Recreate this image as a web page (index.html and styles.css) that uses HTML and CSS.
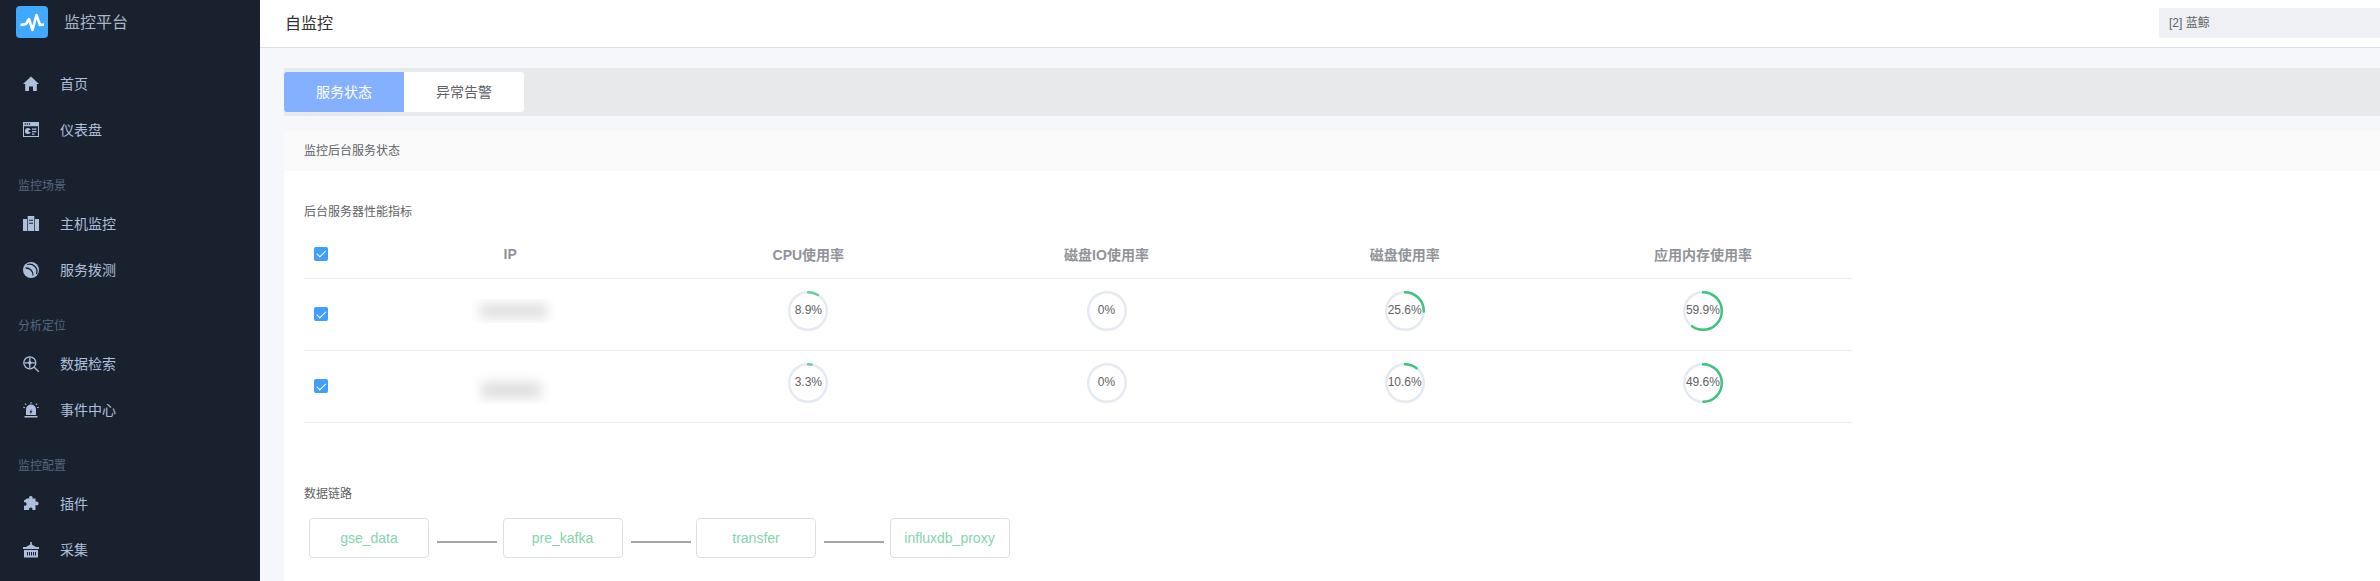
FILE: index.html
```html
<!DOCTYPE html>
<html>
  <head>
    <meta charset="utf-8" />
    <title>自监控</title>
    <link rel="stylesheet" href="styles.css">
  </head>
  <body>
    <div class="app">
      <aside class="sidebar">
        <div class="brand">
          <svg class="brand-logo" viewBox="0 0 32 32">
            <rect width="32" height="32" rx="4" fill="#3fa9ff" />
            <polyline points="4.5,19 10,18 13,13 16.5,24 20.5,9 24,19 28,18.5" fill="none" stroke="#fff" stroke-width="2.6" stroke-linejoin="round" />
          </svg>
          <span class="brand-name">监控平台</span>
        </div>
        <nav class="menu">
          <a class="menu-item">
            <svg class="menu-icon" viewBox="0 0 16 16"><path d="M8 .5 16 8h-2.200v7H10v-4.600H6V15H2.200V8H0z" /></svg>
            <span class="menu-text">首页</span>
          </a>
          <a class="menu-item">
            <svg class="menu-icon" viewBox="0 0 16 16"><path fill-rule="evenodd" d="M0 0h16v15H0zM1.500 1.200v1.600h1.200V1.200zm2.200 0v1.600h1.200V1.200zm2.200 0v1.600h1.200V1.200zM1 4.300V14h14V4.300zM5 6a3 3 0 1 0 2.800 4H5.600V8h2.200A3 3 0 0 0 5 6zm4 .6v1.200h4.500V6.600zm0 2.500v1.200h4.500V9.100zm0 2.400v1.200h2.500v-1.200z" /></svg>
            <span class="menu-text">仪表盘</span>
          </a>
          <div class="menu-label">监控场景</div>
          <a class="menu-item">
            <svg class="menu-icon" viewBox="0 0 16 16"><path fill-rule="evenodd" d="M0 3h4v12H0zM4.700 0h6.600v15H4.700zM12 3h4v12h-4zM6 3.800v1h4v-1zm0 3v1h4v-1z" /></svg>
            <span class="menu-text">主机监控</span>
          </a>
          <a class="menu-item">
            <svg class="menu-icon" viewBox="0 0 16 16"><circle cx="8" cy="8" r="8" /><path class="icon-cut" d="M4 2.500A7.500 7.500 0 0 1 13.500 12M2.500 6A7 7 0 0 1 10 13.500" /></svg>
            <span class="menu-text">服务拨测</span>
          </a>
          <div class="menu-label">分析定位</div>
          <a class="menu-item">
            <svg class="menu-icon menu-icon-line" viewBox="0 0 16 16"><circle cx="6.800" cy="6.800" r="6" /><circle class="icon-dot" cx="6.800" cy="6.800" r="1.800" /><path d="M6.800 1.500v10.600M1.500 6.800h10.600M11.200 11.200 16 16" /></svg>
            <span class="menu-text">数据检索</span>
          </a>
          <a class="menu-item">
            <svg class="menu-icon" viewBox="0 0 16 16"><path fill-rule="evenodd" d="M1.500 14h13v1.500h-13zM3 13V7.500a5 5 0 0 1 10 0V13zM8.500 7 6.500 10.300h1.300L7.300 12.500l2.200-3.300H8.200zM7.500 0h1v1.800h-1zM1.600 1.800l.8-.6 1.200 1.500-.8.6zM13.600 1.200l.8.6-1.200 1.500-.8-.6zM0 5.600l.3-.9 1.800.6-.3.9zM15.700 4.700l.3.9-1.800.6-.3-.9z" /></svg>
            <span class="menu-text">事件中心</span>
          </a>
          <div class="menu-label">监控配置</div>
          <a class="menu-item">
            <svg class="menu-icon" viewBox="0 0 16 16"><path d="M4 2.500h2.300C5.600 1 6.400 0 7.800 0s2.200 1 1.600 2.500h3.100v3.200c1.500-.7 3.100 0 3.100 1.700s-1.600 2.400-3.100 1.700V14H9.300c.6-1.500-.2-2.400-1.500-2.400S5.600 12.500 6.200 14H1V9.600c1.200.6 2.600 0 2.600-1.600S2.200 5.800 1 6.400V4.500z" /></svg>
            <span class="menu-text">插件</span>
          </a>
          <a class="menu-item">
            <svg class="menu-icon" viewBox="0 0 16 16"><path fill-rule="evenodd" d="M7.200 0h1.600v2.500L13 5h3v2H0V5h3l4.200-2.500zM1 8h14v7.500H1zM4 10v3.500h1V10zm2 0v3.500h1V10zm2 0v3.500h1V10zm2 0v3.500h1V10zm2 0v3.500h1V10z" /></svg>
            <span class="menu-text">采集</span>
          </a>
        </nav>
      </aside>

      <div class="main">
        <header class="topbar">
          <h1 class="page-title">自监控</h1>
          <div class="biz-select">[2] 蓝鲸</div>
        </header>

        <div class="content">
          <div class="tabs">
            <div class="tab tab-active">服务状态</div>
            <div class="tab">异常告警</div>
          </div>

          <section class="panel">
            <div class="panel-head">监控后台服务状态</div>
            <div class="panel-body">
              <div class="section-title">后台服务器性能指标</div>
              <table class="server-table">
                <colgroup>
                  <col class="col-check" />
                  <col class="col-metric" />
                  <col class="col-metric" />
                  <col class="col-metric" />
                  <col class="col-metric" />
                  <col class="col-metric" />
                </colgroup>
                <thead>
                  <tr>
                    <th class="cell-check"><span class="checkbox"></span></th>
                    <th>IP</th>
                    <th>CPU使用率</th>
                    <th>磁盘IO使用率</th>
                    <th>磁盘使用率</th>
                    <th>应用内存使用率</th>
                  </tr>
                </thead>
                <tbody>
                  <tr>
                    <td class="cell-check"><span class="checkbox"></span></td>
                    <td><div class="masked masked-short"><div class="masked-ink"></div></div></td>
                    <td>
                      <div class="donut donut-light">
                        <svg viewBox="0 0 40 40"><circle class="donut-track" cx="20" cy="20" r="18.800" /><circle class="donut-value" cx="20" cy="20" r="18.800" pathLength="100" stroke-dasharray="8.9 100" transform="rotate(-90 20 20)" /></svg>
                        <span class="donut-text">8.9%</span>
                      </div>
                    </td>
                    <td>
                      <div class="donut">
                        <svg viewBox="0 0 40 40"><circle class="donut-track" cx="20" cy="20" r="18.800" /></svg>
                        <span class="donut-text">0%</span>
                      </div>
                    </td>
                    <td>
                      <div class="donut">
                        <svg viewBox="0 0 40 40"><circle class="donut-track" cx="20" cy="20" r="18.800" /><circle class="donut-value" cx="20" cy="20" r="18.800" pathLength="100" stroke-dasharray="25.6 100" transform="rotate(-90 20 20)" /></svg>
                        <span class="donut-text">25.6%</span>
                      </div>
                    </td>
                    <td>
                      <div class="donut">
                        <svg viewBox="0 0 40 40"><circle class="donut-track" cx="20" cy="20" r="18.800" /><circle class="donut-value" cx="20" cy="20" r="18.800" pathLength="100" stroke-dasharray="59.9 100" transform="rotate(-90 20 20)" /></svg>
                        <span class="donut-text">59.9%</span>
                      </div>
                    </td>
                  </tr>
                  <tr>
                    <td class="cell-check"><span class="checkbox"></span></td>
                    <td><div class="masked masked-tall"><div class="masked-ink"></div></div></td>
                    <td>
                      <div class="donut donut-light">
                        <svg viewBox="0 0 40 40"><circle class="donut-track" cx="20" cy="20" r="18.800" /><circle class="donut-value" cx="20" cy="20" r="18.800" pathLength="100" stroke-dasharray="3.3 100" transform="rotate(-90 20 20)" /></svg>
                        <span class="donut-text">3.3%</span>
                      </div>
                    </td>
                    <td>
                      <div class="donut">
                        <svg viewBox="0 0 40 40"><circle class="donut-track" cx="20" cy="20" r="18.800" /></svg>
                        <span class="donut-text">0%</span>
                      </div>
                    </td>
                    <td>
                      <div class="donut">
                        <svg viewBox="0 0 40 40"><circle class="donut-track" cx="20" cy="20" r="18.800" /><circle class="donut-value" cx="20" cy="20" r="18.800" pathLength="100" stroke-dasharray="10.6 100" transform="rotate(-90 20 20)" /></svg>
                        <span class="donut-text">10.6%</span>
                      </div>
                    </td>
                    <td>
                      <div class="donut">
                        <svg viewBox="0 0 40 40"><circle class="donut-track" cx="20" cy="20" r="18.800" /><circle class="donut-value" cx="20" cy="20" r="18.800" pathLength="100" stroke-dasharray="49.6 100" transform="rotate(-90 20 20)" /></svg>
                        <span class="donut-text">49.6%</span>
                      </div>
                    </td>
                  </tr>
                </tbody>
              </table>

              <div class="section-title section-chain">数据链路</div>
              <div class="chain">
                <div class="chain-node">gse_data</div>
                <div class="chain-line"></div>
                <div class="chain-node">pre_kafka</div>
                <div class="chain-line"></div>
                <div class="chain-node">transfer</div>
                <div class="chain-line"></div>
                <div class="chain-node">influxdb_proxy</div>
              </div>
            </div>
          </section>
        </div>
      </div>
    </div>
  </body>
</html>
```

FILE: styles.css
```css
* {
  box-sizing: border-box;
}
html,
body {
  height: 100%;
}
body {
  margin: 0;
  overflow: hidden;
  background-color: #f5f7fb;
  color: #606266;
  font-family: "Liberation Sans", "Noto Sans CJK SC", sans-serif;
  font-size: 12px;
}
.app {
  display: flex;
  height: 100vh;
}

/* sidebar */
.sidebar {
  flex: 0 0 260px;
  background-color: #19212f;
  color: #aebfdb;
}
.brand {
  display: flex;
  align-items: center;
  gap: 16px;
  height: 44px;
  padding: 6px 0 6px 16px;
}
.brand-logo {
  width: 32px;
  height: 32px;
}
.brand-name {
  margin-bottom: 3px;
  font-size: 16px;
  color: #a9b6c9;
}
.menu {
  padding-top: 17px;
}
.menu-item {
  display: flex;
  align-items: center;
  height: 46px;
  padding-left: 23px;
  font-size: 14px;
}
.menu-text {
  margin-bottom: 2px;
}
.menu-icon {
  width: 16px;
  height: 16px;
  margin-right: 21px;
  fill: #aebfdb;
}
.menu-icon-line {
  fill: none;
  stroke: #aebfdb;
  stroke-width: 1.300;
}
.icon-cut {
  fill: none;
  stroke: #19212f;
  stroke-width: 1.300;
}
.icon-dot {
  fill: #aebfdb;
  stroke: none;
}
.menu-label {
  height: 30px;
  margin-top: 18px;
  padding-left: 18px;
  line-height: 30px;
  color: #56657f;
}

/* header */
.main {
  flex: 1;
  min-width: 0;
  display: flex;
  flex-direction: column;
}
.topbar {
  flex: 0 0 48px;
  display: flex;
  align-items: center;
  justify-content: space-between;
  padding: 0 0 1px 25px;
  background-color: #fff;
  border-bottom: 1px solid #dbdfe9;
}
.page-title {
  margin: 0 0 2px;
  font-size: 16px;
  font-weight: normal;
  color: #303133;
}
.biz-select {
  flex: 0 0 221px;
  height: 30px;
  padding-left: 10px;
  line-height: 30px;
  background-color: #eff0f4;
  border-radius: 2px 0 0 2px;
}

/* tabs */
.content {
  flex: 1;
  padding: 20px 0 0 24px;
  overflow: hidden;
}
.tabs {
  display: flex;
  height: 48px;
  padding: 4px 0;
  background-color: #e8e9eb;
}
.tab {
  width: 120px;
  background-color: #fff;
  border-radius: 0 3px 3px 0;
  font-size: 14px;
  line-height: 40px;
  text-align: center;
}
.tab-active {
  background-color: #85b0ff;
  border-radius: 3px 0 0 3px;
  color: #fff;
}

/* panel */
.panel {
  margin-top: 15px;
  background-color: #fff;
  height: 100%;
}
.panel-head {
  height: 40px;
  padding-left: 20px;
  line-height: 40px;
  background-color: #fafafa;
}
.panel-body {
  padding: 33px 0 0 20px;
}
.section-title {
  line-height: 16px;
}
.section-chain {
  margin-top: 63px;
}

/* server table */
.server-table {
  width: 1548px;
  margin-top: 10px;
  table-layout: fixed;
  border-collapse: collapse;
}
.col-check {
  width: 57px;
}
.col-metric {
  width: 298px;
}
.server-table th,
.server-table td {
  padding: 0;
  border-bottom: 1px solid #ebeef5;
  text-align: center;
}
.server-table th {
  height: 48px;
  font-size: 14px;
  font-weight: bold;
  color: #909399;
}
.server-table td {
  height: 72px;
}
.server-table .cell-check {
  padding-left: 10px;
  text-align: left;
}
.checkbox {
  position: relative;
  display: block;
  width: 14px;
  height: 14px;
  background-color: #409eff;
  border-radius: 2px;
}
.checkbox::after {
  content: "";
  position: absolute;
  left: 4.500px;
  top: 1.500px;
  width: 3.500px;
  height: 7.500px;
  border: solid #fff;
  border-width: 0 1.300px 1.300px 0;
  transform: rotate(45deg);
}

/* blurred ip */
.masked {
  margin: 0 auto;
  overflow: hidden;
  background-color: #fff;
}
.masked-short {
  width: 85px;
  height: 24px;
  margin-bottom: 6px;
  transform: translateX(3px);
}
.masked-tall {
  width: 78px;
  height: 35px;
  transform: translateX(1px);
}
.masked-ink {
  height: 14px;
  margin: 5px 9px 0;
  background-color: #dedede;
  filter: blur(6px);
}
.masked-tall .masked-ink {
  height: 16px;
  margin-top: 13px;
}

/* donut */
.donut {
  position: relative;
  width: 40px;
  height: 40px;
  margin: 0 auto 6px;
}
.donut svg {
  display: block;
  width: 40px;
  height: 40px;
}
.donut circle {
  fill: none;
  stroke-width: 2.400;
}
.donut-track {
  stroke: #e5e9f2;
}
.donut-value {
  stroke: #3cc47c;
  stroke-linecap: round;
}
.donut-light .donut-value {
  stroke: #6dcca4;
}
.donut-text {
  position: absolute;
  left: 0;
  right: 0;
  top: 0;
  line-height: 39px;
  text-align: center;
}

/* data chain */
.chain {
  display: flex;
  margin: 16px 0 0 5px;
}
.chain-node {
  flex: 0 0 120px;
  height: 40px;
  background-color: #fff;
  border: 1px solid #dcdfe6;
  border-radius: 4px;
  color: #85d5ac;
  font-size: 14px;
  line-height: 38px;
  text-align: center;
}
.chain-line {
  flex: 0 0 60px;
  align-self: center;
  height: 2px;
  margin: 8px 5.500px 0 8px;
  background-color: #a6a6a6;
}
```
